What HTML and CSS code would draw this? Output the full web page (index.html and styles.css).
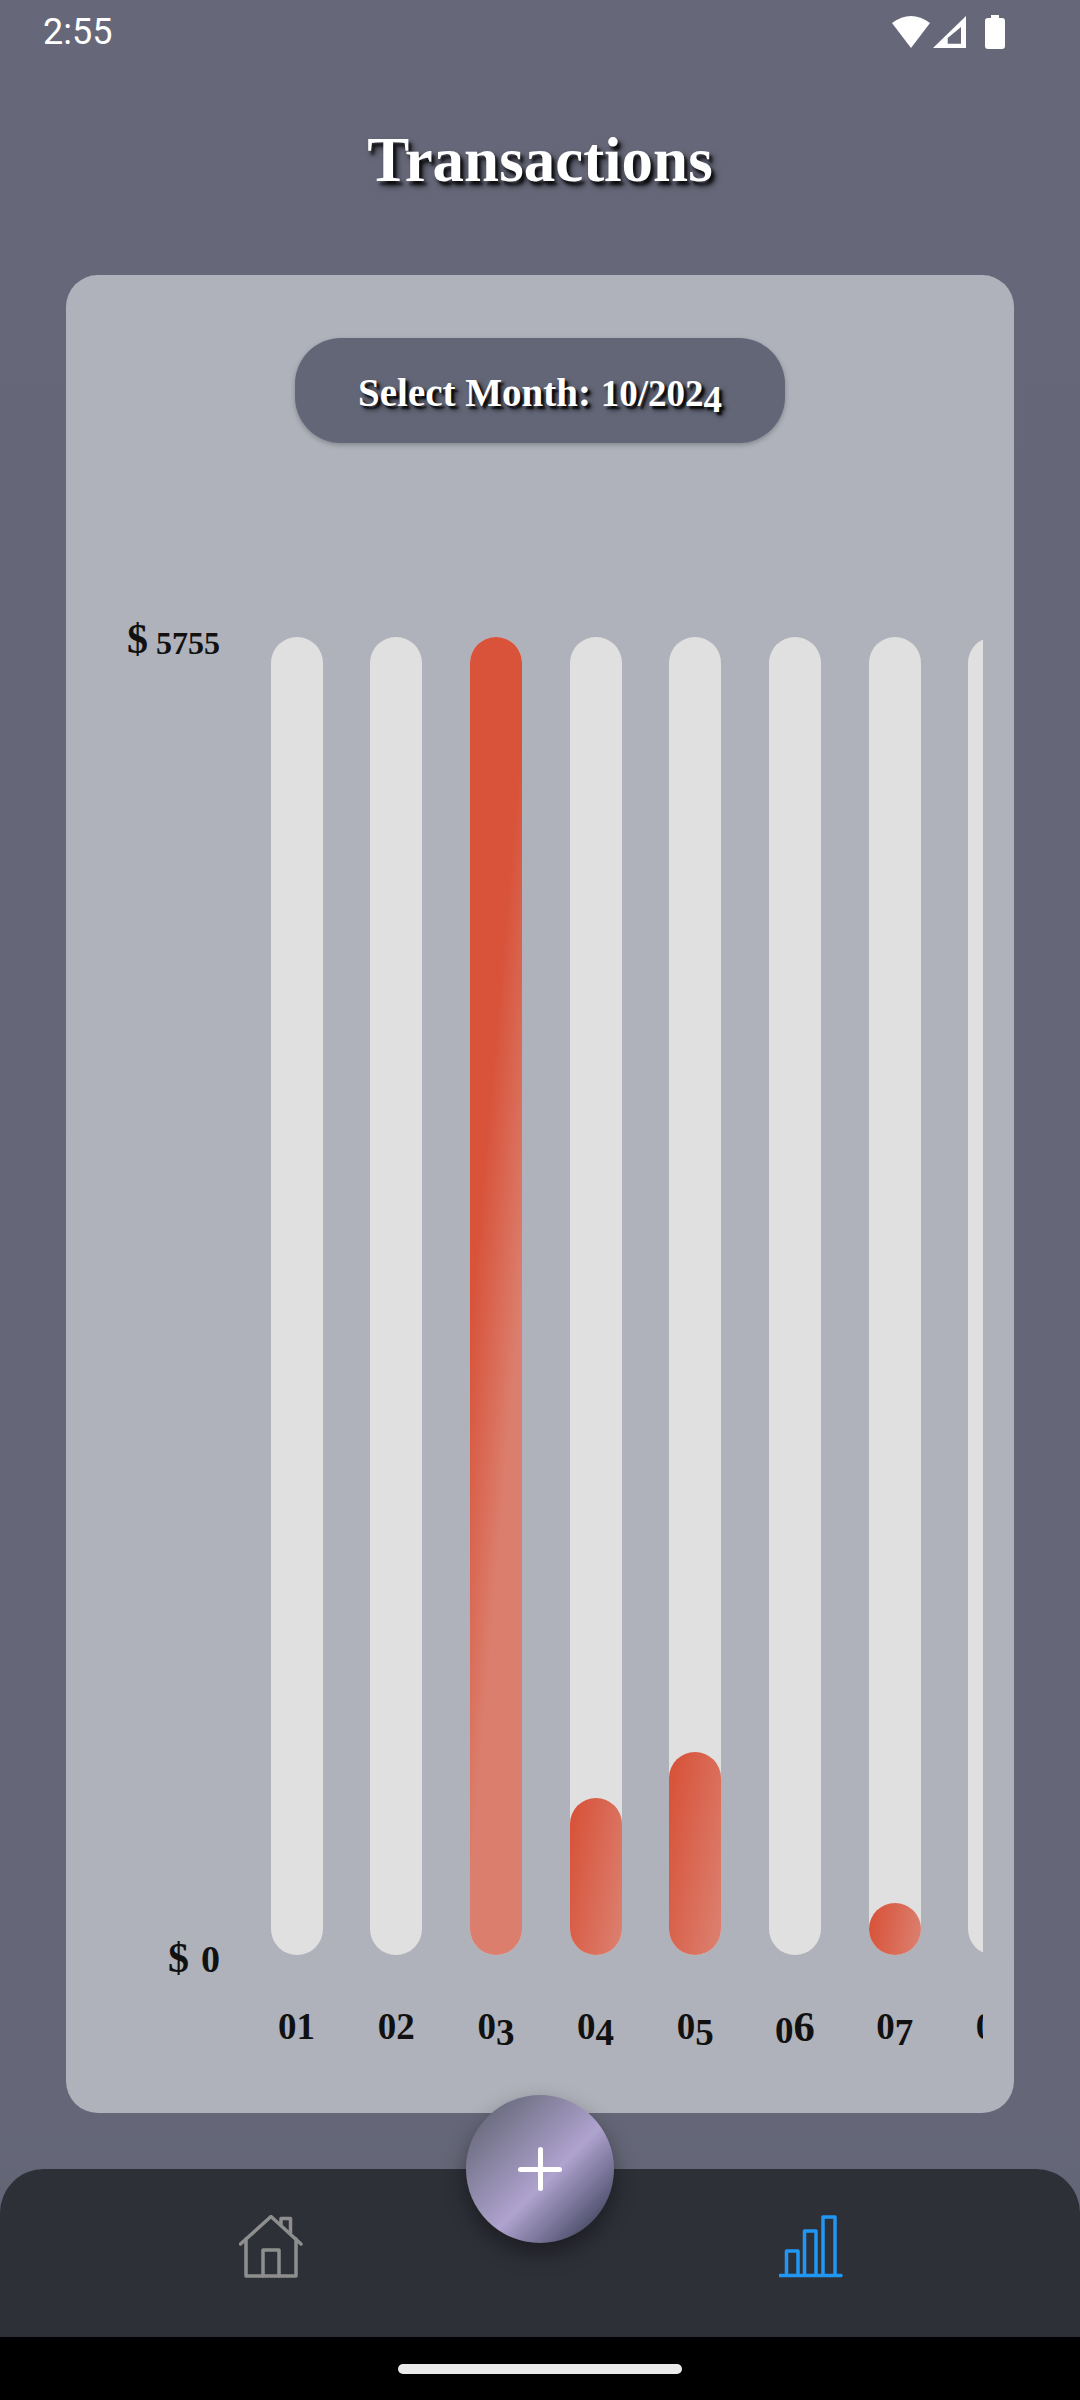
FILE: index.html
```html
<!DOCTYPE html>
<html lang="en">
<head>
    <meta charset="UTF-8">
    <meta name="viewport" content="width=device-width, initial-scale=1.0">
    <title>Transactions</title>
    <link rel="stylesheet" href="styles.css">
</head>
<body>
    <div class="screen">
        <div class="status-bar">
            <span class="clock">2:55</span>
            <svg class="status-icons" width="114" height="36" viewBox="0 0 114 36">
                <path class="solid" d="M19 33 L0 8 Q19 -6 38 8 Z"/>
                <path class="solid" fill-rule="evenodd" d="M41 33 L74 1 V33 Z M55.7 28.7 H69 V12 L55.7 23 Z"/>
                <path class="solid" d="M99 0 H107 V3 H110 Q113 3 113 6 V31 Q113 34 110 34 H96 Q93 34 93 31 V6 Q93 3 96 3 H99 Z"/>
            </svg>
        </div>

        <h1 class="page-title">Transactions</h1>

        <main class="card">
            <button class="month-btn">Select Month: <span class="num">10/202<span class="dn">4</span></span></button>

            <div class="chart">
                <div class="y-axis">
                    <div class="y-label"><span class="dollar">$</span> <span class="dn-small">5755</span></div>
                    <div class="y-label"><span class="dollar">$</span> <span class="zero">0</span></div>
                </div>
                <div class="days">
                    <div class="day">
                        <div class="track"></div>
                        <div class="day-label">01</div>
                    </div>
                    <div class="day">
                        <div class="track"></div>
                        <div class="day-label">02</div>
                    </div>
                    <div class="day">
                        <div class="track"><div class="fill fill-tall" style="height: 100%"></div></div>
                        <div class="day-label">0<span class="dn">3</span></div>
                    </div>
                    <div class="day">
                        <div class="track"><div class="fill" style="height: 157px"></div></div>
                        <div class="day-label">0<span class="dn">4</span></div>
                    </div>
                    <div class="day">
                        <div class="track"><div class="fill" style="height: 203px"></div></div>
                        <div class="day-label">0<span class="dn">5</span></div>
                    </div>
                    <div class="day">
                        <div class="track"></div>
                        <div class="day-label">0<span class="up">6</span></div>
                    </div>
                    <div class="day">
                        <div class="track"><div class="fill" style="height: 52px"></div></div>
                        <div class="day-label">0<span class="dn">7</span></div>
                    </div>
                    <div class="day">
                        <div class="track"></div>
                        <div class="day-label">08</div>
                    </div>
                </div>
            </div>
        </main>

        <nav class="bottom-nav">
            <svg class="nav-icon home-icon" width="64" height="64" viewBox="0 0 64 64">
                <path d="M1.5 29 L32 1.5 L62 29"/>
                <path d="M7 24 V61 H57 V24"/>
                <path d="M24 61 V35 H40 V61"/>
                <path d="M42 10 V3.5 H51.5 V18"/>
            </svg>
            <svg class="nav-icon chart-icon" width="64" height="64" viewBox="0 0 64 64">
                <path d="M1 60.5 H62"/>
                <path d="M7.5 60 V36 H19 V60"/>
                <path d="M25.5 60 V16 H37 V60"/>
                <path d="M44 60 V2 H56 V60"/>
            </svg>
            <button class="fab"><span class="plus"></span></button>
        </nav>

        <div class="gesture-bar"><div class="gesture-pill"></div></div>
    </div>
</body>
</html>
```

FILE: styles.css
```css
* {
    box-sizing: border-box;
}
body {
    margin: 0;
    font-family: "Liberation Serif", serif;
    background-color: #000;
}
.screen {
    width: 1080px;
    height: 2400px;
    display: flex;
    flex-direction: column;
    overflow: hidden;
    background: linear-gradient(180deg, #666879 0%, #656778 88%, #5f6271 100%);
}

/* Status bar */
.status-bar {
    height: 62px;
    padding: 15px 0 0 43px;
    display: flex;
    justify-content: space-between;
    align-items: flex-start;
    color: #fff;
}
.clock {
    font-family: Roboto, sans-serif;
    font-size: 36px;
    line-height: 34px;
}
.status-icons {
    margin-right: 74px;
}
.solid {
    fill: #fff;
}

.page-title {
    margin: 0;
    height: 213px;
    padding-top: 60px;
    font-size: 63px;
    line-height: 76px;
    font-weight: bold;
    text-align: center;
    color: #fff;
    text-shadow: 3px 4px 3px rgba(0, 0, 0, 0.75), 4px 5px 6px rgba(0, 0, 0, 0.6);
}

/* Card */
.card {
    margin: 0 66px;
    height: 1838px;
    padding-top: 63px;
    display: flex;
    flex-direction: column;
    align-items: center;
    background-color: #afb2ba;
    border-radius: 32px;
}
.month-btn {
    width: 490px;
    height: 105px;
    flex-shrink: 0;
    padding: 9px 0 0;
    border: none;
    border-radius: 46px;
    background-color: #636677;
    color: #fff;
    font-family: "Liberation Serif", serif;
    font-size: 39px;
    font-weight: bold;
    text-shadow: 3px 3px 2px rgba(0, 0, 0, 0.8), 4px 4px 5px rgba(0, 0, 0, 0.6);
    box-shadow: 0 2px 5px rgba(0, 0, 0, 0.25);
}
.num {
    font-size: 37px;
}
.dn {
    vertical-align: -0.15em;
}
.dn-small {
    vertical-align: -0.04em;
}
.up {
    font-size: 1.15em;
    vertical-align: 0.04em;
}

/* Chart */
.chart {
    width: 100%;
    margin-top: 172px;
    display: flex;
    align-items: flex-start;
}
.y-axis {
    width: 154px;
    height: 1370px;
    flex-shrink: 0;
    display: flex;
    flex-direction: column;
    justify-content: space-between;
    align-items: flex-end;
}
.y-label {
    font-size: 32px;
    line-height: 48px;
    font-weight: bold;
    color: #111;
    white-space: nowrap;
}
.dollar {
    font-size: 42px;
}
.zero {
    margin-left: 4px;
    font-size: 38px;
}
.days {
    width: 763px;
    padding: 22px 0 0 50.5px;
    display: flex;
    gap: 47.7px;
    overflow: hidden;
}
.day {
    width: 52px;
    flex-shrink: 0;
    display: flex;
    flex-direction: column;
    align-items: center;
}
.track {
    width: 52px;
    height: 1318px;
    display: flex;
    align-items: flex-end;
    background-color: #e0e0e0;
    border-radius: 26px;
}
.fill {
    width: 100%;
    border-radius: 26px;
    background: linear-gradient(100deg, #d8533a 8%, #db7e6d 92%);
}
.fill-tall {
    background: linear-gradient(95deg, #d8533a 36%, #db7e6d 65%);
}
.day-label {
    margin-top: 49px;
    font-size: 37px;
    line-height: 46px;
    font-weight: bold;
    color: #111;
    white-space: nowrap;
}

/* Bottom navigation */
.bottom-nav {
    position: relative;
    height: 168px;
    margin-top: 56px;
    flex-shrink: 0;
    background-color: #2e3038;
    border-radius: 44px 44px 0 0;
}
.nav-icon {
    position: absolute;
    top: 46px;
    fill: none;
    stroke-width: 3.5;
    stroke-linecap: round;
    stroke-linejoin: round;
}
.home-icon {
    left: 239px;
    stroke: #8e8e8e;
}
.chart-icon {
    left: 779px;
    stroke: #2196f3;
}
.fab {
    position: absolute;
    left: 466px;
    top: -74px;
    width: 148px;
    height: 148px;
    padding: 0;
    border: none;
    border-radius: 50%;
    display: flex;
    align-items: center;
    justify-content: center;
    background: linear-gradient(135deg, #646676 8%, #afa3cf 56%, #4a4c68 88%);
    box-shadow: 0 10px 22px rgba(0, 0, 0, 0.4);
}
.plus {
    position: relative;
    width: 44px;
    height: 5px;
    border-radius: 3px;
    background-color: #fff;
}
.plus::after {
    content: "";
    position: absolute;
    left: 19.5px;
    top: -19.5px;
    width: 5px;
    height: 44px;
    border-radius: 3px;
    background-color: #fff;
}

.gesture-bar {
    flex-grow: 1;
    padding-top: 27px;
    display: flex;
    justify-content: center;
    background-color: #000;
}
.gesture-pill {
    width: 284px;
    height: 10px;
    border-radius: 5px;
    background-color: #eaeaea;
}
```
